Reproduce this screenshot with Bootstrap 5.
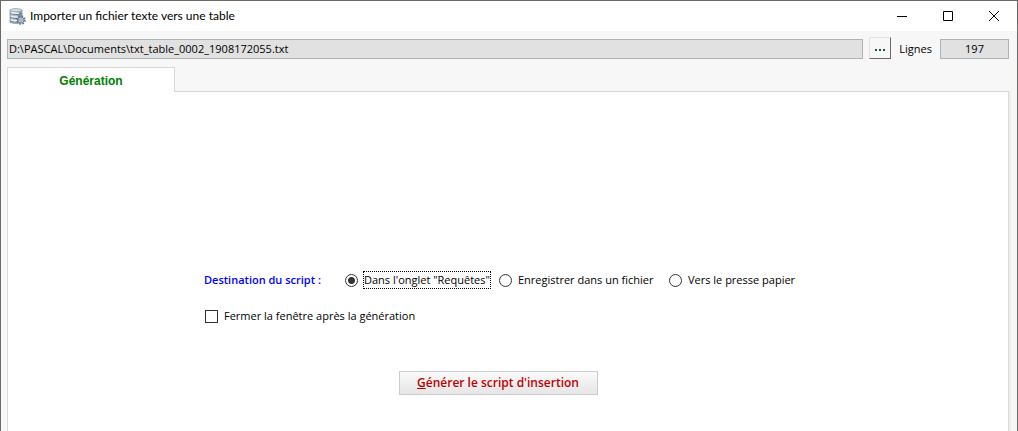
<!DOCTYPE html>
<html lang="fr">
<head>
<meta charset="utf-8">
<meta name="viewport" content="width=device-width, initial-scale=1">
<title>Importer un fichier texte vers une table</title>
<link href="https://cdn.jsdelivr.net/npm/bootstrap@5.3.0/dist/css/bootstrap.min.css" rel="stylesheet">
<style>
body{font:11px/16px "Trebuchet MS","Open Sans",sans-serif;color:#000;background:#f7f7f7}
.window{border:1px solid #6b6a66;border-bottom:0;background:#f7f7f7}
.titlebar{height:30px;background:#fff;padding-left:8px}
.titlebar h1{font:12px/16px "Segoe UI",Lato,sans-serif;margin:0 0 0 4px}
.win-btn{width:46px;height:30px;border:0;background:none;padding:0;display:grid;place-items:center}
.toolbar{padding:6px 8px 0 6px}
.field{height:20px;border:1px solid #adb2b5;border-radius:0;background:#e1e1e1;color:#000;padding:0 1px 1px;font:inherit;min-width:0}
.lines{width:69px;text-align:center}
.lines-label{line-height:20px}
.browse{width:22px;height:22px;padding:4px 0 0;margin:0 8px 0 6px;background:#f7f7f7;border:1px solid;border-color:#e3e3e3 #696969 #696969 #e3e3e3;display:grid;place-items:center}
.tabs{padding:8px 6px 0}
.tab-item{width:168px;height:25px;margin-bottom:-1px;position:relative;background:#fff;border:1px solid #d9d9d9;border-bottom:0;color:#008000;font:bold 12px/16px "Liberation Sans",sans-serif;padding:2px 0 0}
.panel{margin:0 8px 0 6px;background:#fff;border:1px solid #d9d9d9;border-bottom:0;box-shadow:2px 0 #efefef;min-height:calc(100vh - 91px);padding:179px 20px 24px 0}
.options{width:588px;max-width:100%}
.choices{display:grid;grid-template-columns:141px 154px 170px auto;align-items:center}
.dest{color:#00f;font-weight:600}
.choice{padding:0;margin:0;min-height:0;display:flex;align-items:center;gap:5px}
.choice .form-check-input{width:13px;height:13px;margin:0;float:none;border:1px solid #333;background-color:#fff;flex:none;box-shadow:none}
.choice .form-check-input:checked[type=radio]{background-image:radial-gradient(circle,#333 0 3px,transparent 4px)}
.choice [type=checkbox]{border-radius:0}
.choice label{padding:0 1px;white-space:nowrap}
.focused{outline:1px dotted #000;outline-offset:-1px;line-height:18px}
.close-row{padding:19px 0 0 1px}
.generate{width:199px;height:24px;padding:0;border:1px solid #ccc;background:linear-gradient(#fbfbfb,#e5e5e5);color:#c00000;font:600 12px/16px "Trebuchet MS","Open Sans",sans-serif;margin-top:47px}
</style>
</head>
<body>
<main class="window min-vh-100">
  <header class="titlebar d-flex align-items-center">
    <svg width="17" height="17" viewBox="0 0 17 17" aria-hidden="true">
      <path d="M1 2v12.500q6 2.500 12 0V2z" fill="#b4c1cb" stroke="#8d9ca9" stroke-width=".8"/>
      <path d="M8 3h5v11H8z" fill="#8b9dad"/>
      <ellipse cx="7" cy="2.200" rx="6" ry="1.600" fill="#d3dde4" stroke="#93a2ae" stroke-width=".8"/>
      <path d="M1 5.500q6 2 12 0M1 9.500q6 2 12 0M1 13q4 1.500 8 1" fill="none" stroke="#60788d"/>
      <path d="M2 4.500q4 1.200 8 .6M2 8.300q4 1.200 7 .6M2 12q3 1 6 .6" fill="none" stroke="#eff4f7" stroke-width="1.400"/>
      <circle cx="12" cy="12" r="3.900" fill="none" stroke="#62778c" stroke-width="1.800" stroke-dasharray="1.700 1.360"/>
      <circle cx="12" cy="12" r="3" fill="#c0ccd5" stroke="#71869a"/>
      <circle cx="12" cy="12" r="1.200" fill="#f5f8fa" stroke="#5c7086" stroke-width=".6"/>
    </svg>
    <h1>Importer un fichier texte vers une table</h1>
    <div class="d-flex ms-auto">
      <button type="button" class="win-btn" aria-label="Réduire"><svg width="10" height="10"><path d="M0 5.5h10" stroke="#000"/></svg></button>
      <button type="button" class="win-btn" aria-label="Agrandir"><svg width="10" height="10"><path d="M.5.5h9v9h-9z" fill="none" stroke="#000"/></svg></button>
      <button type="button" class="win-btn" aria-label="Fermer"><svg width="10" height="10"><path d="M0 0l10 10M10 0L0 10" stroke="#000"/></svg></button>
    </div>
  </header>
  <div class="toolbar d-flex align-items-end">
    <input class="field flex-grow-1" type="text" readonly aria-label="Fichier" value="D:\PASCAL\Documents\txt_table_0002_1908172055.txt">
    <button type="button" class="browse" aria-label="Parcourir"><svg width="10" height="2"><path d="M0 1h2M4 1h2M8 1h2" stroke="#24465c" stroke-width="2"/></svg></button>
    <label for="lines" class="lines-label me-2">Lignes</label>
    <input id="lines" class="field lines" type="text" readonly value="197">
  </div>
  <div class="tabs d-flex" role="tablist">
    <button type="button" class="tab-item" role="tab" id="tab-gen" aria-selected="true" aria-controls="panel-gen">Génération</button>
  </div>
  <section class="panel" role="tabpanel" id="panel-gen" aria-labelledby="tab-gen">
    <form class="options mx-auto">
      <div class="choices" role="radiogroup" aria-labelledby="dest">
        <span class="dest" id="dest">Destination du script :</span>
        <div class="form-check choice"><input class="form-check-input" type="radio" name="dest" id="d1" checked><label class="focused" for="d1">Dans l'onglet "Requêtes"</label></div>
        <div class="form-check choice"><input class="form-check-input" type="radio" name="dest" id="d2"><label for="d2">Enregistrer dans un fichier</label></div>
        <div class="form-check choice"><input class="form-check-input" type="radio" name="dest" id="d3"><label for="d3">Vers le presse papier</label></div>
      </div>
      <div class="form-check choice close-row"><input class="form-check-input" type="checkbox" id="close"><label for="close">Fermer la fenêtre après la génération</label></div>
      <div class="text-center"><button type="button" class="generate"><u>G</u>énérer le script d'insertion</button></div>
    </form>
  </section>
</main>
<script src="https://cdn.jsdelivr.net/npm/bootstrap@5.3.0/dist/js/bootstrap.bundle.min.js"></script>
</body>
</html>
